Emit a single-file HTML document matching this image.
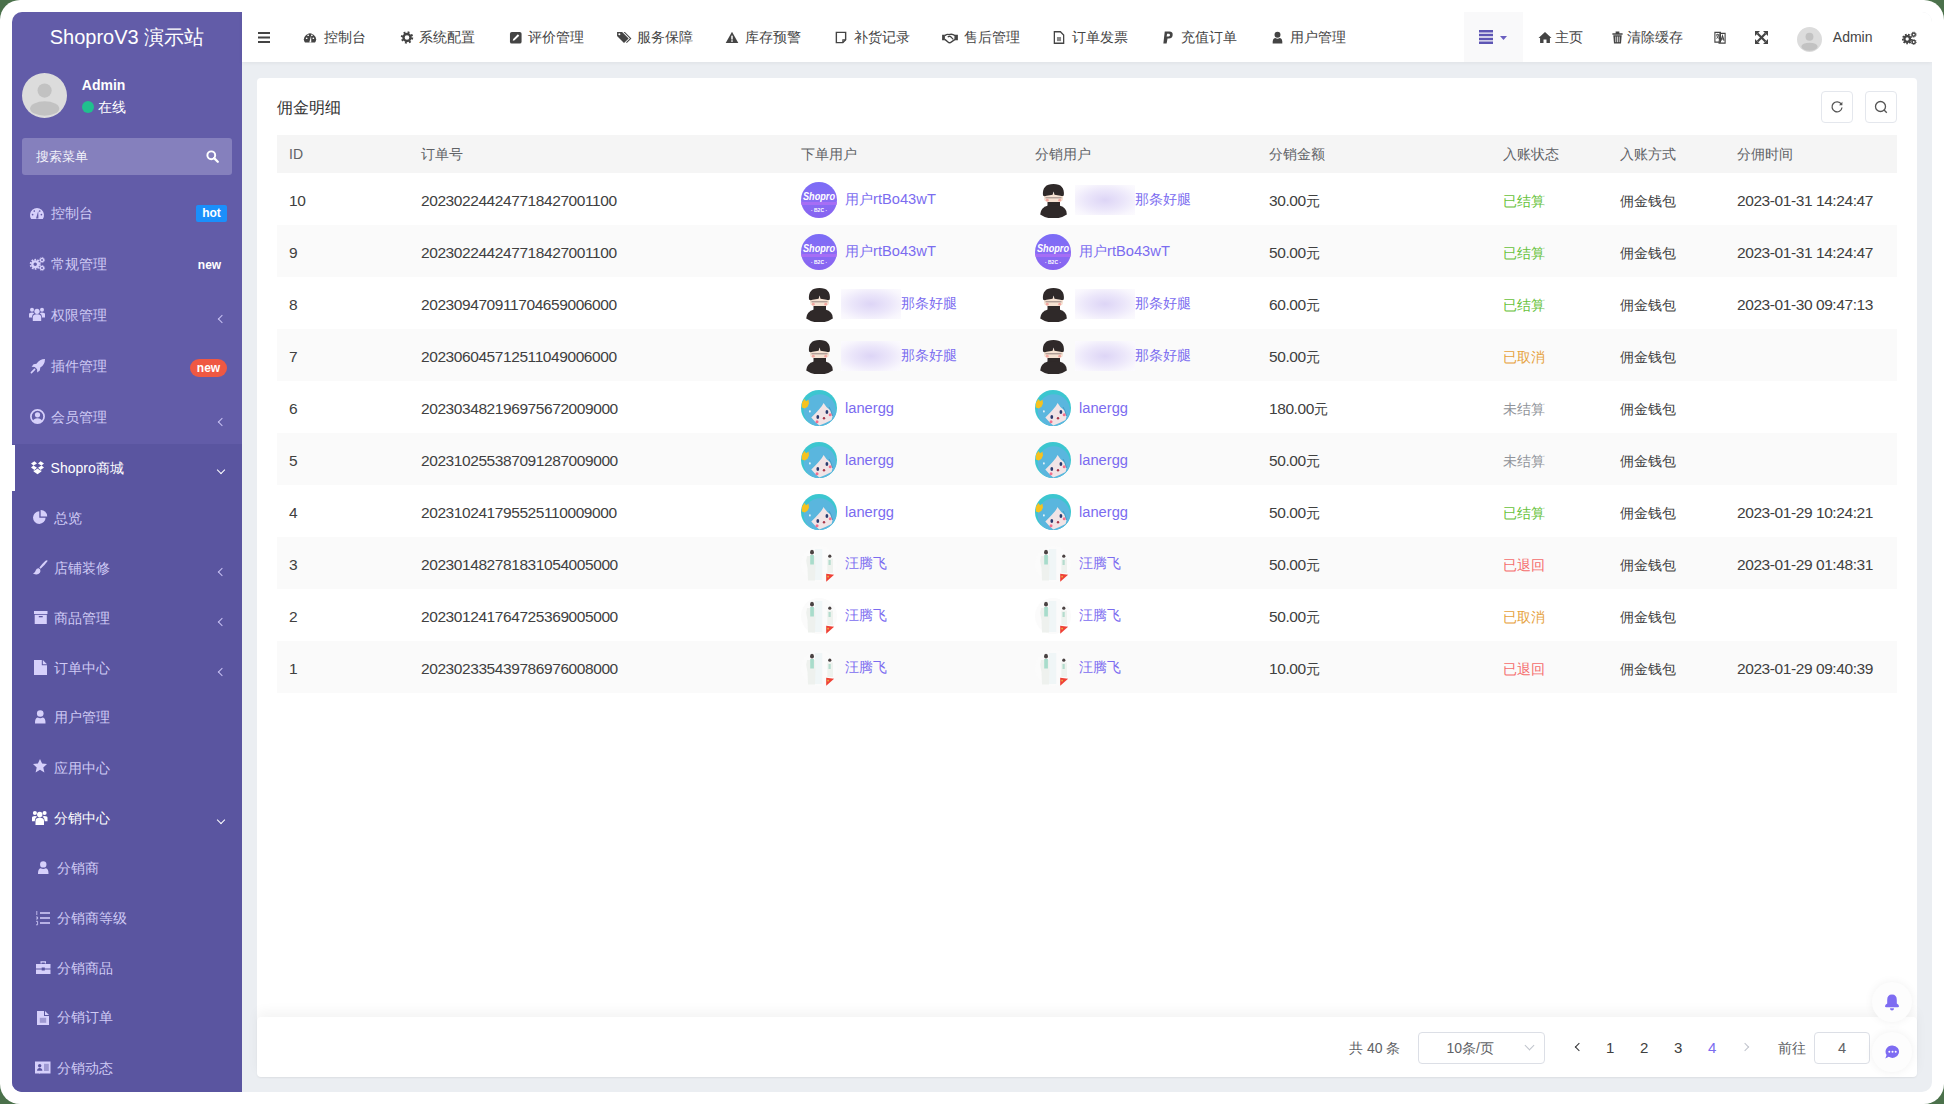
<!DOCTYPE html>
<html><head><meta charset="utf-8">
<style>
*{box-sizing:border-box;margin:0;padding:0}
html,body{width:1944px;height:1104px;overflow:hidden;background:#4b714b;font-family:"Liberation Sans",sans-serif;}
.win{position:absolute;left:0;top:0;width:1944px;height:1104px;background:#fff;border-radius:20px;}
.app{position:absolute;left:12px;top:12px;width:1920px;height:1080px;border-radius:10px;overflow:hidden;background:#ebeef2;}
.abs{position:absolute}
/* sidebar */
.side{position:absolute;left:0;top:0;width:230px;height:1080px;background:#625ca8;}
.side .open{position:absolute;left:0;top:432px;width:230px;height:648px;background:#5a55a0;}
.logo{position:absolute;left:0;top:0;width:230px;height:50px;line-height:50px;text-align:center;color:#fff;font-size:20px;}
/* header */
.hdr{position:absolute;left:230px;top:0;width:1690px;height:50px;background:#fff;box-shadow:0 1px 4px rgba(0,0,0,.06);}
.card{position:absolute;left:245px;top:65.5px;width:1660px;height:944.5px;background:#fff;border-radius:4px;}
.pager{position:absolute;left:245px;top:1005px;width:1660px;height:60px;background:#fff;border-radius:4px;box-shadow:0 -6px 12px rgba(0,0,0,.045),0 1px 2px rgba(0,0,0,.06);}
.uav{position:absolute;left:10px;top:60.5px;width:45px;height:45px}
.uname{position:absolute;left:69.8px;top:65px;color:#fff;font-weight:bold;font-size:14px;line-height:16px}
.ustat{position:absolute;left:69.8px;top:87px;color:#fff;font-size:14px;line-height:16px;display:flex;align-items:center}
.ustat .dot{display:inline-block;width:12px;height:12px;border-radius:50%;background:#20c08e;margin-right:4px;margin-left:0}
.search{position:absolute;left:10px;top:125.5px;width:210px;height:37px;border-radius:3px;background:#8580bd;color:#f3f2fa;font-size:13px;line-height:37px;padding-left:14px}
.search .sic{position:absolute;left:184px;top:12px}
.mi{position:absolute;left:0;width:230px;height:50px;display:flex;align-items:center;color:#d0cbf5;font-size:14px;white-space:nowrap;font-weight:500}
.mi .ic{position:absolute;width:14px;height:14px;color:#d6d0fb;top:18px}
.mi span{position:absolute;top:0;line-height:50px}
.mi.l1 .ic{left:18px}
.mi.l1 span{left:38.6px}
.mi.l2 .ic{left:21px}
.mi.l2 span{left:42px}
.mi.l3 .ic{left:25px;width:12px;height:12px;top:19px}
.mi.l3 span{left:45px}
.mi.act,.mi.w{color:#fff}
.mi.act .ic,.mi.w .ic{color:#fff}
.actbar{position:absolute;left:0;top:432.5px;width:3px;height:46px;background:#fff}
.badge{position:absolute;font-size:12px;font-weight:bold;color:#fff;line-height:17px;height:17px;text-align:center}
.badge.hot{left:184px;top:17px;width:31px;background:#1a8ffb;border-radius:2px}
.badge.new0{left:181.5px;top:18px;width:32px}
.badge.newr{left:178px;top:18px;width:37px;background:#ef5843;border-radius:9px;height:18px;line-height:18px}
.chev{position:absolute;width:6px;height:6px;border-left:1.6px solid #c8c2f4;border-bottom:1.6px solid #c8c2f4}
.chev.l{left:207px;top:26.5px;transform:rotate(45deg)}
.chev.d{left:205.5px;top:24px;transform:rotate(-45deg);border-color:#fff}
.hdr .hi{position:absolute;top:19px;width:14px;height:13px}
.hdr .ht{position:absolute;top:17px;line-height:16px;font-size:14px;color:#444;white-space:nowrap}
.hdr .hov{position:absolute;left:1222px;top:0;width:59px;height:50px;background:#f9f9fa}
.ctitle{position:absolute;left:20px;top:20px;font-size:16px;line-height:20px;color:#333}
.tbtn{position:absolute;top:13px;width:32px;height:32px;border:1px solid #e4e7ed;border-radius:4px;display:flex;align-items:center;justify-content:center}
.tbl{position:absolute;left:20px;top:57.5px;width:1620px;height:558px}
.thead{position:absolute;left:0;top:0;width:1620px;height:38px;background:#f5f5f5;color:#606266;font-size:14px}
.thead span{position:absolute;top:0;line-height:38px;white-space:nowrap}
.tr{position:absolute;left:0;width:1620px;height:52px;background:#fff;color:#404040;font-size:14px}
.tr.s{background:#fafafa}
.tr>span{position:absolute;top:1.5px;line-height:52px;white-space:nowrap}
.tr .num{font-size:15.5px;letter-spacing:-0.42px}
.tr .num .cj{font-style:normal;font-size:14px;letter-spacing:0}
.st.ok{color:#67c23a}.st.cancel{color:#e6a23c}.st.wait{color:#909399}.st.back{color:#f56c6c}
.uc{position:absolute;top:8.5px;height:36px;display:flex;align-items:center;white-space:nowrap}
.uc .av{flex:none}
.uc .nm{color:#7b6cf0;font-size:14.7px;margin-left:8px}
.uc .cjn{font-size:14px;font-style:normal}
.uc .blur{display:inline-block;width:60px;height:30px;margin-left:4px;margin-right:-8px;background:radial-gradient(ellipse at center,#ddd5f6 0%,#ebe6fa 45%,#f8f6fd 80%,#fcfbfe 100%)}
.pager .pt{position:absolute;top:23px;line-height:16px;font-size:14px;color:#606266;white-space:nowrap}
.psel{position:absolute;left:1161px;top:14.5px;width:127px;height:32px;border:1px solid #dcdfe6;border-radius:4px}
.psel span{position:absolute;left:27.5px;top:7px;line-height:16px;font-size:14px;color:#606266;white-space:nowrap}
.pchev{position:absolute;left:107px;top:9px;width:7px;height:7px;border-right:1px solid #c0c4cc;border-bottom:1px solid #c0c4cc;transform:rotate(45deg)}
.pn{position:absolute;top:23px;line-height:16px;font-size:15px;color:#404040}
.pn.on{color:#7b6cf0}
.parr{position:absolute;top:27px;width:6px;height:6px;border-left:1.3px solid #303133;border-bottom:1.3px solid #303133}
.parr.l{transform:rotate(45deg)}
.parr.r{transform:rotate(-135deg);border-color:#c0c4cc}
.pinp{position:absolute;left:1557px;top:14.5px;width:56px;height:32px;border:1px solid #dcdfe6;border-radius:4px;text-align:center;line-height:30px;font-size:14.7px;color:#606266}
.fab{position:absolute;width:40px;height:40px;border-radius:50%;background:#fdfdfd;box-shadow:0 0 10px rgba(0,0,0,.06);display:flex;align-items:center;justify-content:center}
.ic2{position:absolute;color:#d6d0fb;overflow:visible}
</style></head><body>
<svg width="0" height="0" style="position:absolute"><defs>
<linearGradient id="gsh" x1="0" y1="0" x2="0" y2="1"><stop offset="0" stop-color="#7b6cf6"/><stop offset="0.55" stop-color="#8a6cf4"/><stop offset="1" stop-color="#8663f0"/></linearGradient>
<clipPath id="cc"><circle cx="18" cy="18" r="18"/></clipPath>
<g id="av-shopro"><circle cx="18" cy="18" r="18" fill="url(#gsh)"/><rect x="0" y="20" width="36" height="3" fill="#a66ef5" clip-path="url(#cc)"/><text x="18" y="18" text-anchor="middle" font-family="Liberation Sans" font-style="italic" font-weight="bold" font-size="10" textLength="32" lengthAdjust="spacingAndGlyphs" fill="#fff">Shopro</text><text x="18" y="29.5" text-anchor="middle" font-family="Liberation Sans" font-weight="bold" font-size="5" fill="#fff">·  B2C  ·</text></g>
<g id="av-boy"><path d="M9 11 H28 V17 Q28 20.5 18.5 21 Q9 20.5 9 17Z" fill="#f6e2d2"/><path d="M10.5 15.8 H26.5" stroke="#7a6a6a" stroke-width="0.8"/><circle cx="12.3" cy="18.2" r="1.4" fill="#f3a6a0"/><circle cx="24.7" cy="18.2" r="1.4" fill="#f3a6a0"/><path d="M8 13.5 Q6.8 2 18.5 2 Q30 2 28.8 13.5 Q27 14.5 25.5 13.8 L19.5 12.8 L18.6 9.5 L17.6 12.8 L11.5 13.8 Q9.5 14.6 8 13.5Z" fill="#2f2929"/><path d="M12.5 20 H25 V24.5 H12.5Z" fill="#2f2929"/><path d="M5.2 32.5 Q5.5 25.5 13 23.5 H24.5 Q32 25.5 31.8 32.5 Q26 36.5 18.5 36.5 Q11 36.5 5.2 32.5Z" fill="#2f2929"/></g>
<g id="av-lan"><circle cx="18" cy="18" r="18" fill="#3cc6d0"/><g clip-path="url(#cc)"><circle cx="18.8" cy="20.5" r="16.2" fill="#5ab6de"/><path d="M10.3 27.5 Q15 23 18 19.5 Q21 16.5 22.6 13 Q25 17.5 29.5 20.5 L31.5 26.5 L30.5 30 Q24 33.5 18.3 35.5 Q13.5 31.5 10.3 27.5Z" fill="#f1e4e6"/><path d="M28 17 Q30 20 31.5 26" stroke="#3f94bd" stroke-width="0.8" fill="none"/></g><ellipse cx="16.8" cy="27" rx="1.4" ry="2.1" fill="#2a3a6e"/><ellipse cx="25.9" cy="22" rx="1.4" ry="2.1" fill="#2a3a6e"/><circle cx="23" cy="28.3" r="1.2" fill="#a8384a"/><circle cx="16" cy="31.7" r="1.5" fill="#f46f8c"/><circle cx="29.2" cy="24.8" r="1.5" fill="#f46f8c"/><path d="M1 12.5 L3.5 9 L5 11.3 L7.5 9.8 L8 13.5 L6.5 16.8 L3.8 18.6 L0.8 17.5Z" fill="#f6c21f"/><ellipse cx="8.9" cy="21.4" rx="0.8" ry="1.1" fill="#fff"/></g>
<g id="av-wang"><circle cx="18" cy="18" r="18" fill="#fbfbfb"/><rect x="14" y="3" width="7.2" height="31" fill="#f0f6f7"/><path d="M6 10 H14 L14.5 20 L14 34.5 H7 L6.5 22 L5.2 15Z" fill="#eef1ee"/><rect x="9.2" y="9" width="3.7" height="9.5" fill="#a8dccb"/><path d="M9 6.5 Q9 3.8 11 3.8 Q13 3.8 13 6.5 Q13 8.4 11 8.4 Q9 8.4 9 6.5Z" fill="#4a4242"/><path d="M26.3 12.5 H32 V27 H26.3Z" fill="#eef2ee"/><rect x="27.5" y="14" width="2.2" height="5" fill="#b4dccd"/><circle cx="28.8" cy="10.2" r="1.6" fill="#4a4242"/><path d="M25.2 27.7 L33.1 28.8 L25.2 35.7Z" fill="#ef4035"/><rect x="26.3" y="29.8" width="1.6" height="1.6" fill="#e8b040"/></g>
</defs></svg>
<div class="win"></div>
<div class="app">
  <div class="side">
    <div class="open"></div>
    <div class="actbar"></div>
    <svg class="ic2" style="left:18.0px;top:195.0px;width:14.0px;height:12.0px" viewBox="0 0 14 12" preserveAspectRatio="none"><path d="M1.2 12 A7 7 0 1 1 12.8 12 Z" fill="currentColor"/><circle cx="2.6" cy="7.6" r="0.85" fill="#625ca8"/><circle cx="4.3" cy="4" r="0.85" fill="#625ca8"/><circle cx="9.7" cy="4" r="0.85" fill="#625ca8"/><circle cx="11.4" cy="7.6" r="0.85" fill="#625ca8"/><path d="M6 11.5 L8.3 3.8 L8.4 11.5Z" fill="#625ca8"/></svg>
    <svg class="ic2" style="left:17.5px;top:244.5px;width:15.0px;height:14.0px" viewBox="0 0 15 14" preserveAspectRatio="none"><circle cx="5.2" cy="7.3" r="2.9" fill="none" stroke="currentColor" stroke-width="2.3"/><circle cx="5.2" cy="7.3" r="4.6" fill="none" stroke="currentColor" stroke-width="1.8" stroke-dasharray="1.7 1.2"/><circle cx="12" cy="3" r="1.6" fill="none" stroke="currentColor" stroke-width="1.3"/><circle cx="12" cy="11" r="1.6" fill="none" stroke="currentColor" stroke-width="1.3"/><circle cx="12" cy="3" r="2.6" fill="none" stroke="currentColor" stroke-width="0.9" stroke-dasharray="0.9 0.8"/><circle cx="12" cy="11" r="2.6" fill="none" stroke="currentColor" stroke-width="0.9" stroke-dasharray="0.9 0.8"/></svg>
    <svg class="ic2" style="left:17.0px;top:295.0px;width:16.0px;height:14.0px" viewBox="0 0 16 14" preserveAspectRatio="none"><circle cx="8" cy="4.3" r="2.6" fill="currentColor"/><circle cx="3" cy="2.8" r="2" fill="currentColor"/><circle cx="13" cy="2.8" r="2" fill="currentColor"/><path d="M3.8 14 V10.3 Q3.8 7.3 8 7.3 Q12.2 7.3 12.2 10.3 V14Z" fill="currentColor"/><path d="M0 10.5 V7.3 Q0 5.6 3 5.6 Q4.6 5.6 5.2 6.2 Q3 7.4 3 10 V10.5Z M16 10.5 V7.3 Q16 5.6 13 5.6 Q11.4 5.6 10.8 6.2 Q13 7.4 13 10 V10.5Z" fill="currentColor"/></svg>
    <svg class="ic2" style="left:18.5px;top:346.5px;width:14.0px;height:14.0px" viewBox="0 0 14 14" preserveAspectRatio="none"><path d="M14 0 Q8.5 0 5.5 4.8 L2.6 5.2 L0.6 7.8 L3.8 8 L6.1 10.3 L6.2 13.5 L8.8 11.5 L9.3 8.6 Q14 5.5 14 0Z" fill="currentColor"/><path d="M3.6 10.4 L0.4 13.6" stroke="currentColor" stroke-width="1.6" stroke-linecap="round"/></svg>
    <svg class="ic2" style="left:17.5px;top:397.0px;width:15.0px;height:15.0px" viewBox="0 0 15 15" preserveAspectRatio="none"><circle cx="7.5" cy="7.5" r="6.6" fill="none" stroke="currentColor" stroke-width="1.7"/><circle cx="7.5" cy="5.8" r="2.6" fill="currentColor"/><path d="M2.9 12.1 Q4 9.3 7.5 9.3 Q11 9.3 12.1 12.1 Q10.2 13.9 7.5 13.9 Q4.8 13.9 2.9 12.1Z" fill="currentColor"/></svg>
    <svg class="ic2" style="color:#fff;left:18.5px;top:449.0px;width:13.0px;height:13.5px" viewBox="0 0 13 13.5" preserveAspectRatio="none"><path d="M3.4 0.3 L0 2.6 L2.5 4.6 L6 2.4Z M9.6 0.3 L13 2.6 L10.5 4.6 L7 2.4Z M0 6.6 L3.4 8.9 L6 6.8 L2.5 4.6Z M13 6.6 L9.6 8.9 L7 6.8 L10.5 4.6Z M3.4 9.8 L6.5 12 L9.6 9.8 L6.5 7.6Z" fill="currentColor"/><path d="M2.6 9.4 V10.6 L6.5 13.3 L10.4 10.6 V9.4" fill="currentColor"/></svg>
    <svg class="ic2" style="left:20.5px;top:498.0px;width:14.5px;height:14.0px" viewBox="0 0 14.5 14" preserveAspectRatio="none"><path d="M6.3 1.3 A6.3 6.3 0 1 0 12.6 7.7 H6.3Z" fill="currentColor"/><path d="M7.6 0 A6.3 6.3 0 0 1 14.2 6.4 H7.6Z" fill="currentColor"/></svg>
    <svg class="ic2" style="left:20.5px;top:547.5px;width:14.5px;height:15.0px" viewBox="0 0 14.5 15" preserveAspectRatio="none"><path d="M14.3 0.3 Q13.5 0 12.5 0.8 Q9 4 6.4 7.6 L7.6 8.8 Q11.6 5.3 14.2 1.5 Q14.6 0.8 14.3 0.3Z" fill="currentColor"/><path d="M5.8 8.2 Q3.6 8 2.8 10.2 Q2.3 12.5 0 13.5 Q4.5 15.8 6.9 12.8 Q7.8 11.4 7.2 9.5Z" fill="currentColor"/></svg>
    <svg class="ic2" style="left:21.5px;top:598.5px;width:13.5px;height:13.0px" viewBox="0 0 13.5 13" preserveAspectRatio="none"><rect x="0" y="0" width="13.5" height="3" fill="currentColor"/><path d="M0.7 3.8 H12.8 V13 H0.7Z" fill="currentColor"/><rect x="4.8" y="5" width="3.9" height="1.3" fill="#5a55a0"/></svg>
    <svg class="ic2" style="left:21.5px;top:647.5px;width:13.0px;height:15.0px" viewBox="0 0 13 15" preserveAspectRatio="none"><path d="M0 0 H7.8 V5.2 H13 V15 H0Z" fill="currentColor"/><path d="M8.8 0 L13 4.2 H8.8Z" fill="currentColor"/></svg>
    <svg class="ic2" style="left:23.0px;top:697.5px;width:10.5px;height:13.5px" viewBox="0 0 10.5 13.5" preserveAspectRatio="none"><circle cx="5.25" cy="3.5" r="3.3" fill="currentColor"/><path d="M0 13.5 Q-0.2 8 2.7 7.5 Q5.25 9 7.8 7.5 Q10.7 8 10.5 13.5Z" fill="currentColor"/></svg>
    <svg class="ic2" style="left:21.0px;top:747.0px;width:14.0px;height:14.0px" viewBox="0 0 14 14" preserveAspectRatio="none"><path d="M7 0 L9.1 4.6 L14 5.1 L10.3 8.4 L11.4 13.4 L7 10.8 L2.6 13.4 L3.7 8.4 L0 5.1 L4.9 4.6Z" fill="currentColor"/></svg>
    <svg class="ic2" style="color:#fff;left:20.0px;top:798.0px;width:15.5px;height:15.0px" viewBox="0 0 16 15" preserveAspectRatio="none"><circle cx="8" cy="4.6" r="2.8" fill="currentColor"/><circle cx="3" cy="3" r="2.1" fill="currentColor"/><circle cx="13" cy="3" r="2.1" fill="currentColor"/><path d="M3.6 15 V11 Q3.6 7.8 8 7.8 Q12.4 7.8 12.4 11 V15Z" fill="currentColor"/><path d="M0 11.2 V7.8 Q0 6 3 6 Q4.6 6 5.3 6.6 Q2.9 7.9 2.9 10.7 V11.2Z M16 11.2 V7.8 Q16 6 13 6 Q11.4 6 10.7 6.6 Q13.1 7.9 13.1 10.7 V11.2Z" fill="currentColor"/></svg>
    <svg class="ic2" style="left:26.0px;top:849.0px;width:10.5px;height:13.0px" viewBox="0 0 10.5 13" preserveAspectRatio="none"><circle cx="5.25" cy="3.4" r="3.2" fill="currentColor"/><path d="M0 13 Q-0.2 7.8 2.7 7.3 Q5.25 8.7 7.8 7.3 Q10.7 7.8 10.5 13Z" fill="currentColor"/></svg>
    <svg class="ic2" style="left:24.0px;top:899.0px;width:14.0px;height:14.0px" viewBox="0 0 14 14" preserveAspectRatio="none"><path d="M4 2 H14 M4 7 H14 M4 12 H14" stroke="currentColor" stroke-width="1.7"/><path d="M0.8 0 V4 M0 6 H1.6 V8 H0 M0 10.3 H1.6 V13.8 H0" stroke="currentColor" stroke-width="0.8" fill="none"/></svg>
    <svg class="ic2" style="left:23.5px;top:949.0px;width:14.5px;height:13.0px" viewBox="0 0 14.5 13" preserveAspectRatio="none"><path d="M4.5 2.6 V0.3 H10 V2.6 H8.8 V1.5 H5.7 V2.6Z" fill="currentColor"/><path d="M0 3 H14.5 V7.4 H8.8 V6.6 H5.7 V7.4 H0Z M0 8.4 H5.7 V9.4 H8.8 V8.4 H14.5 V13 H0Z" fill="currentColor"/></svg>
    <svg class="ic2" style="left:25.0px;top:998.5px;width:12.0px;height:14.0px" viewBox="0 0 12 14" preserveAspectRatio="none"><path d="M0 0 H7 V5 H12 V14 H0Z" fill="currentColor"/><path d="M8 0 L12 4 H8Z" fill="currentColor"/><rect x="2.8" y="6.8" width="6.4" height="5" fill="#5a55a0" opacity=".45"/></svg>
    <svg class="ic2" style="left:23.0px;top:1049.0px;width:15.5px;height:13.0px" viewBox="0 0 15.5 13" preserveAspectRatio="none"><path d="M0 0.5 H15.5 V12.5 H0Z" fill="currentColor"/><circle cx="4.7" cy="4.8" r="1.7" fill="#5a55a0"/><path d="M2 9.8 Q2.3 7 4.7 7 Q7.1 7 7.4 9.8Z" fill="#5a55a0"/><rect x="9" y="2.8" width="4.8" height="7.2" fill="#5a55a0" opacity=".45"/><rect x="4" y="12.5" width="0.8" height="0.5" fill="currentColor"/></svg>
    <div class="logo">ShoproV3 演示站</div>
    <div class="uav"><svg width="45" height="45" viewBox="0 0 45 45"><circle cx="22.5" cy="22.5" r="22.5" fill="#dcdcdc"/><circle cx="22.6" cy="17.6" r="7.1" fill="#c2c2c2"/><ellipse cx="22.7" cy="35.5" rx="14.6" ry="7.2" fill="#c2c2c2"/></svg></div>
    <div class="uname">Admin</div>
    <div class="ustat"><i class="dot"></i>在线</div>
    <div class="search">搜索菜单<svg class="sic" width="13" height="13" viewBox="0 0 16 16"><circle cx="6.5" cy="6.5" r="4.8" fill="none" stroke="#fff" stroke-width="2.4"/><path d="M10 10 L14.5 14.5" stroke="#fff" stroke-width="2.8" stroke-linecap="round"/></svg></div>

    <div class="mi l1" style="top:175.8px"><span>控制台</span><b class="badge hot">hot</b></div>
    <div class="mi l1" style="top:227px"><span>常规管理</span><b class="badge new0">new</b></div>
    <div class="mi l1" style="top:277.8px"><span>权限管理</span><i class="chev l"></i></div>
    <div class="mi l1" style="top:328.5px"><span>插件管理</span><b class="badge newr">new</b></div>
    <div class="mi l1" style="top:380px"><span>会员管理</span><i class="chev l"></i></div>
    <div class="mi l1 act" style="top:430.8px"><span>Shopro商城</span><i class="chev d"></i></div>

    <div class="mi l2" style="top:480.5px"><span>总览</span></div>
    <div class="mi l2" style="top:530.8px"><span>店铺装修</span><i class="chev l"></i></div>
    <div class="mi l2" style="top:580.7px"><span>商品管理</span><i class="chev l"></i></div>
    <div class="mi l2" style="top:630.6px"><span>订单中心</span><i class="chev l"></i></div>
    <div class="mi l2" style="top:680.4px"><span>用户管理</span></div>
    <div class="mi l2" style="top:730.9px"><span>应用中心</span></div>
    <div class="mi l2 w" style="top:781px"><span>分销中心</span><i class="chev d"></i></div>

    <div class="mi l3" style="top:831px"><span>分销商</span></div>
    <div class="mi l3" style="top:880.7px"><span>分销商等级</span></div>
    <div class="mi l3" style="top:930.6px"><span>分销商品</span></div>
    <div class="mi l3" style="top:980.4px"><span>分销订单</span></div>
    <div class="mi l3" style="top:1030.9px"><span>分销动态</span></div>
  </div>
  <div class="hdr">
    <svg class="hi" style="left:16px;top:20px;width:12px;height:11px" viewBox="0 0 12 11"><path d="M0 1 H12 M0 5.5 H12 M0 10 H12" stroke="#444" stroke-width="2"/></svg>
    <svg class="hi" style="left:61px" viewBox="0 0 14 14"><path d="M1.6 12.5 A6.4 6.4 0 1 1 12.4 12.5 Z" fill="#444"/><circle cx="3.4" cy="7.8" r="0.9" fill="#fff"/><circle cx="5" cy="4.6" r="0.9" fill="#fff"/><circle cx="9" cy="4.6" r="0.9" fill="#fff"/><circle cx="10.6" cy="7.8" r="0.9" fill="#fff"/><path d="M6.2 12.3 L8.2 5 L8.4 12.3Z" fill="#fff"/></svg><span class="ht" style="left:82px">控制台</span>
    <svg class="hi" style="left:157.6px" viewBox="0 0 14 14"><circle cx="7" cy="7" r="3.8" fill="none" stroke="#444" stroke-width="2.6"/><circle cx="7" cy="7" r="5.6" fill="none" stroke="#444" stroke-width="2.2" stroke-dasharray="2 2.4"/></svg><span class="ht" style="left:177px">系统配置</span>
    <svg class="hi" style="left:266.5px" viewBox="0 0 14 14"><rect x="0.5" y="1" width="12.5" height="12.5" rx="2" fill="#444"/><path d="M3.5 10.5 L4 8.5 L9 3.5 L10.5 5 L5.5 10Z" fill="#fff"/></svg><span class="ht" style="left:285.7px">评价管理</span>
    <svg class="hi" style="left:374px;width:16px" viewBox="0 0 16 14"><path d="M0.5 1 H6 L13 8 L8 13 L0.5 5.5Z" fill="#444"/><circle cx="3" cy="3.5" r="1.1" fill="#fff"/><path d="M7.5 1 H9 L16 8 L11 13 L10.2 12.2 L14.4 8Z" fill="#444"/></svg><span class="ht" style="left:394.6px">服务保障</span>
    <svg class="hi" style="left:483px" viewBox="0 0 14 14"><path d="M7 0.8 L13.8 13 H0.2Z" fill="#444"/><rect x="6.2" y="5" width="1.6" height="4.2" fill="#fff"/><rect x="6.2" y="10" width="1.6" height="1.6" fill="#fff"/></svg><span class="ht" style="left:503px">库存预警</span>
    <svg class="hi" style="left:593px;width:12px" viewBox="0 0 12 14"><path d="M1 1.5 H11 V9.5 L8 12.5 H1Z" fill="none" stroke="#444" stroke-width="1.5"/><path d="M11 9.5 H8 V12.5" fill="none" stroke="#444" stroke-width="1.2"/></svg><span class="ht" style="left:612px">补货记录</span>
    <svg class="hi" style="left:699px;width:18px" viewBox="0 0 18 14"><path d="M0.5 4 H3.5 V10 H0.5Z M14.5 4 H17.5 V10 H14.5Z" fill="#444"/><path d="M3.5 5 Q6 3 8 4 Q11 2.5 14.5 5 V9 L9.5 12.5 Q8 13 6.5 11.5 L3.5 9" fill="none" stroke="#444" stroke-width="1.5"/><path d="M6.5 6.5 Q9 4.5 11 7.5 L12.5 9" fill="none" stroke="#444" stroke-width="1.3"/></svg><span class="ht" style="left:721.5px">售后管理</span>
    <svg class="hi" style="left:810.8px;width:12px" viewBox="0 0 12 14"><path d="M1 0.8 H7.5 L11 4.3 V13.2 H1Z" fill="none" stroke="#444" stroke-width="1.4"/><rect x="3.8" y="6.5" width="4.4" height="4.4" fill="#888"/></svg><span class="ht" style="left:830px">订单发票</span>
    <svg class="hi" style="left:920px;width:12px" viewBox="0 0 12 14"><path d="M2.5 0.5 H7.5 Q11.5 0.5 11 4.5 Q10.5 8 7 8 H5.5 L4.5 13.5 H1Z" fill="#444"/><path d="M5 3 H7 Q8.3 3 8 4.5 Q7.7 5.8 6.4 5.8 H4.5Z" fill="#fff"/></svg><span class="ht" style="left:938.8px">充值订单</span>
    <svg class="hi" style="left:1030px;width:11px" viewBox="0 0 11 14"><circle cx="5.5" cy="4" r="3.2" fill="#444"/><path d="M0.3 13.5 Q0 8 3 7.6 Q5.5 9 8 7.6 Q11 8 10.7 13.5Z" fill="#444"/></svg><span class="ht" style="left:1048px">用户管理</span>

    <div class="hov"></div>
    <svg class="hi" style="left:1237px;top:18px;width:14px;height:14px" viewBox="0 0 14 14"><path d="M0 1.3 H14 M0 5.1 H14 M0 8.9 H14 M0 12.7 H14" stroke="#5d55b4" stroke-width="2.5"/></svg>
    <svg class="hi" style="left:1257.6px;top:24px;width:7px;height:4px" viewBox="0 0 7 4"><path d="M0 0 H7 L3.5 4Z" fill="#6a5fc0"/></svg>
    <svg class="hi" style="left:1296px" viewBox="0 0 14 14"><path d="M7 1 L14 7.5 L12.3 7.5 V13 H8.6 V9.2 H5.4 V13 H1.7 V7.5 H0Z" fill="#444"/></svg><span class="ht" style="left:1313px">主页</span>
    <svg class="hi" style="left:1370.4px;width:11px" viewBox="0 0 11 14"><path d="M0 2.5 H11 V4 H0Z M3.5 0.5 H7.5 V2.5 H3.5Z" fill="#444"/><path d="M1 4.5 H10 L9.3 13.5 H1.7Z" fill="#444"/><path d="M3.6 6 V12 M5.5 6 V12 M7.4 6 V12" stroke="#fff" stroke-width="0.8"/></svg><span class="ht" style="left:1385px">清除缓存</span>
    <svg class="hi" style="left:1471.5px;width:12px" viewBox="0 0 12 14"><path d="M0.5 1.5 H6.5 V12 H0.5Z" fill="none" stroke="#444" stroke-width="1.2"/><path d="M6 2.5 H11.5 V13 H5Z" fill="none" stroke="#444" stroke-width="1.2"/><path d="M7 10.5 L8.7 5 L10.4 10.5 M7.6 8.6 H9.8" fill="none" stroke="#444" stroke-width="1.1"/><path d="M2 4 H5 M3.5 3 V4 M2.3 4 Q3 8 5 8 M4.8 4 Q4 8 2 8" fill="none" stroke="#444" stroke-width="0.9"/></svg>
    <svg class="hi" style="left:1513px;top:19px;width:13px;height:13px" viewBox="0 0 13 13"><path d="M2.5 2.5 L10.5 10.5 M10.5 2.5 L2.5 10.5" stroke="#444" stroke-width="2.2"/><path d="M0 0 H5 L0 5Z M13 0 V5 L8 0Z M0 13 V8 L5 13Z M13 13 H8 L13 8Z" fill="#444"/></svg>
    <svg class="hi" style="left:1555px;top:14.5px;width:25px;height:25px" viewBox="0 0 24 24"><circle cx="12" cy="12" r="12" fill="#dcdcdc"/><circle cx="12" cy="9.4" r="3.8" fill="#c2c2c2"/><ellipse cx="12" cy="18.9" rx="7.8" ry="3.9" fill="#c2c2c2"/></svg>
    <span class="ht" style="left:1590.8px;font-family:'Liberation Sans',sans-serif">Admin</span>
    <svg class="hi" style="left:1660px;top:18.5px;width:15px;height:14px" viewBox="0 0 15 14"><circle cx="5.2" cy="8" r="2.8" fill="none" stroke="#444" stroke-width="2.3"/><circle cx="5.2" cy="8" r="4.4" fill="none" stroke="#444" stroke-width="1.8" stroke-dasharray="1.7 1.3"/><circle cx="11.7" cy="3.6" r="1.6" fill="none" stroke="#444" stroke-width="1.4"/><circle cx="11.7" cy="11" r="1.6" fill="none" stroke="#444" stroke-width="1.4"/><circle cx="11.7" cy="3.6" r="2.5" fill="none" stroke="#444" stroke-width="1" stroke-dasharray="1 0.9"/><circle cx="11.7" cy="11" r="2.5" fill="none" stroke="#444" stroke-width="1" stroke-dasharray="1 0.9"/></svg>
  </div>
<div class="card">
<div class="ctitle">佣金明细</div>
<div class="tbtn" style="left:1564px"><svg width="14" height="14" viewBox="0 0 14 14"><path d="M11.3 4.2 A5 5 0 1 0 12 7.5" fill="none" stroke="#555" stroke-width="1.3"/><path d="M12.4 1.8 L12.4 5.2 L9 5.2Z" fill="#555"/></svg></div>
<div class="tbtn" style="left:1608px"><svg width="14" height="14" viewBox="0 0 14 14"><circle cx="6.5" cy="6.5" r="5" fill="none" stroke="#555" stroke-width="1.3"/><path d="M10 10 L12.8 12.8" stroke="#555" stroke-width="1.3"/></svg></div>
<div class="tbl">
<div class="thead"><span style="left:12px">ID</span><span style="left:144px">订单号</span><span style="left:524px">下单用户</span><span style="left:758px">分销用户</span><span style="left:992px">分销金额</span><span style="left:1226px">入账状态</span><span style="left:1343px">入账方式</span><span style="left:1460px">分佣时间</span></div>
<div class="tr" style="top:38px"><span class="num" style="left:12px">10</span><span class="num" style="left:144px">202302244247718427001100</span><div class="uc" style="left:524px"><svg class="av" width="36" height="36"><use href="#av-shopro"/></svg><span class="nm"><i class="cjn">用户</i>rtBo43wT</span></div><div class="uc" style="left:758px"><svg class="av" width="36" height="36"><use href="#av-boy"/></svg><i class="blur"></i><span class="nm cjn">那条好腿</span></div><span class="num" style="left:992px">30.00<i class="cj">元</i></span><span class="st ok" style="left:1226px">已结算</span><span style="left:1343px">佣金钱包</span><span class="num" style="left:1460px">2023-01-31 14:24:47</span></div>
<div class="tr s" style="top:90px"><span class="num" style="left:12px">9</span><span class="num" style="left:144px">202302244247718427001100</span><div class="uc" style="left:524px"><svg class="av" width="36" height="36"><use href="#av-shopro"/></svg><span class="nm"><i class="cjn">用户</i>rtBo43wT</span></div><div class="uc" style="left:758px"><svg class="av" width="36" height="36"><use href="#av-shopro"/></svg><span class="nm"><i class="cjn">用户</i>rtBo43wT</span></div><span class="num" style="left:992px">50.00<i class="cj">元</i></span><span class="st ok" style="left:1226px">已结算</span><span style="left:1343px">佣金钱包</span><span class="num" style="left:1460px">2023-01-31 14:24:47</span></div>
<div class="tr" style="top:142px"><span class="num" style="left:12px">8</span><span class="num" style="left:144px">202309470911704659006000</span><div class="uc" style="left:524px"><svg class="av" width="36" height="36"><use href="#av-boy"/></svg><i class="blur"></i><span class="nm cjn">那条好腿</span></div><div class="uc" style="left:758px"><svg class="av" width="36" height="36"><use href="#av-boy"/></svg><i class="blur"></i><span class="nm cjn">那条好腿</span></div><span class="num" style="left:992px">60.00<i class="cj">元</i></span><span class="st ok" style="left:1226px">已结算</span><span style="left:1343px">佣金钱包</span><span class="num" style="left:1460px">2023-01-30 09:47:13</span></div>
<div class="tr s" style="top:194px"><span class="num" style="left:12px">7</span><span class="num" style="left:144px">202306045712511049006000</span><div class="uc" style="left:524px"><svg class="av" width="36" height="36"><use href="#av-boy"/></svg><i class="blur"></i><span class="nm cjn">那条好腿</span></div><div class="uc" style="left:758px"><svg class="av" width="36" height="36"><use href="#av-boy"/></svg><i class="blur"></i><span class="nm cjn">那条好腿</span></div><span class="num" style="left:992px">50.00<i class="cj">元</i></span><span class="st cancel" style="left:1226px">已取消</span><span style="left:1343px">佣金钱包</span></div>
<div class="tr" style="top:246px"><span class="num" style="left:12px">6</span><span class="num" style="left:144px">202303482196975672009000</span><div class="uc" style="left:524px"><svg class="av" width="36" height="36"><use href="#av-lan"/></svg><span class="nm">lanergg</span></div><div class="uc" style="left:758px"><svg class="av" width="36" height="36"><use href="#av-lan"/></svg><span class="nm">lanergg</span></div><span class="num" style="left:992px">180.00<i class="cj">元</i></span><span class="st wait" style="left:1226px">未结算</span><span style="left:1343px">佣金钱包</span></div>
<div class="tr s" style="top:298px"><span class="num" style="left:12px">5</span><span class="num" style="left:144px">202310255387091287009000</span><div class="uc" style="left:524px"><svg class="av" width="36" height="36"><use href="#av-lan"/></svg><span class="nm">lanergg</span></div><div class="uc" style="left:758px"><svg class="av" width="36" height="36"><use href="#av-lan"/></svg><span class="nm">lanergg</span></div><span class="num" style="left:992px">50.00<i class="cj">元</i></span><span class="st wait" style="left:1226px">未结算</span><span style="left:1343px">佣金钱包</span></div>
<div class="tr" style="top:350px"><span class="num" style="left:12px">4</span><span class="num" style="left:144px">202310241795525110009000</span><div class="uc" style="left:524px"><svg class="av" width="36" height="36"><use href="#av-lan"/></svg><span class="nm">lanergg</span></div><div class="uc" style="left:758px"><svg class="av" width="36" height="36"><use href="#av-lan"/></svg><span class="nm">lanergg</span></div><span class="num" style="left:992px">50.00<i class="cj">元</i></span><span class="st ok" style="left:1226px">已结算</span><span style="left:1343px">佣金钱包</span><span class="num" style="left:1460px">2023-01-29 10:24:21</span></div>
<div class="tr s" style="top:402px"><span class="num" style="left:12px">3</span><span class="num" style="left:144px">202301482781831054005000</span><div class="uc" style="left:524px"><svg class="av" width="36" height="36"><use href="#av-wang"/></svg><span class="nm cjn">汪腾飞</span></div><div class="uc" style="left:758px"><svg class="av" width="36" height="36"><use href="#av-wang"/></svg><span class="nm cjn">汪腾飞</span></div><span class="num" style="left:992px">50.00<i class="cj">元</i></span><span class="st back" style="left:1226px">已退回</span><span style="left:1343px">佣金钱包</span><span class="num" style="left:1460px">2023-01-29 01:48:31</span></div>
<div class="tr" style="top:454px"><span class="num" style="left:12px">2</span><span class="num" style="left:144px">202301241764725369005000</span><div class="uc" style="left:524px"><svg class="av" width="36" height="36"><use href="#av-wang"/></svg><span class="nm cjn">汪腾飞</span></div><div class="uc" style="left:758px"><svg class="av" width="36" height="36"><use href="#av-wang"/></svg><span class="nm cjn">汪腾飞</span></div><span class="num" style="left:992px">50.00<i class="cj">元</i></span><span class="st cancel" style="left:1226px">已取消</span><span style="left:1343px">佣金钱包</span></div>
<div class="tr s" style="top:506px"><span class="num" style="left:12px">1</span><span class="num" style="left:144px">202302335439786976008000</span><div class="uc" style="left:524px"><svg class="av" width="36" height="36"><use href="#av-wang"/></svg><span class="nm cjn">汪腾飞</span></div><div class="uc" style="left:758px"><svg class="av" width="36" height="36"><use href="#av-wang"/></svg><span class="nm cjn">汪腾飞</span></div><span class="num" style="left:992px">10.00<i class="cj">元</i></span><span class="st back" style="left:1226px">已退回</span><span style="left:1343px">佣金钱包</span><span class="num" style="left:1460px">2023-01-29 09:40:39</span></div>
</div>
</div>
<div class="pager">
<span class="pt" style="left:1092px">共 40 条</span>
<div class="psel"><span>10条/页</span><i class="pchev"></i></div>
<i class="parr l" style="left:1318.6px"></i>
<span class="pn" style="left:1349px">1</span>
<span class="pn" style="left:1383px">2</span>
<span class="pn" style="left:1417px">3</span>
<span class="pn on" style="left:1451px">4</span>
<i class="parr r" style="left:1484.6px"></i>
<span class="pt" style="left:1521.3px">前往</span>
<div class="pinp">4</div>
</div>
<div class="fab" style="left:1860px;top:970px"><svg width="14" height="17" viewBox="0 0 14 17"><path d="M7 0.5 Q11.8 0.5 11.8 6 V9.5 Q14 10.6 14 12.3 Q14 13.3 12.8 13.3 H1.2 Q0 13.3 0 12.3 Q0 10.6 2.2 9.5 V6 Q2.2 0.5 7 0.5Z" fill="#7e6cf2"/><path d="M5 14.2 H9 Q9 16.6 7 16.6 Q5 16.6 5 14.2Z" fill="#7e6cf2"/></svg></div>
<div class="fab" style="left:1860px;top:1020px"><svg width="17" height="17" viewBox="0 0 17 17"><path d="M8.5 1.5 A6.5 6.2 0 1 1 4.8 12.8 L1.3 14.5 L2.6 11 A6.5 6.2 0 0 1 8.5 1.5Z" fill="#7e6cf2"/><circle cx="5.3" cy="7.8" r="1" fill="#fff"/><circle cx="8.5" cy="7.8" r="1" fill="#fff"/><circle cx="11.7" cy="7.8" r="1" fill="#fff"/></svg></div>
</div>
</body></html>
